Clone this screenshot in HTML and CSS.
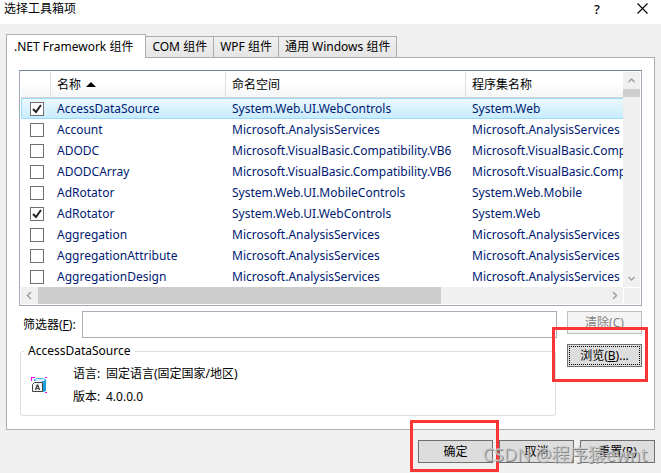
FILE: index.html
```html
<!DOCTYPE html>
<html lang="zh-CN">
<head>
  <meta charset="UTF-8" />
  <meta name="viewport" content="width=device-width, initial-scale=1.0"/>
  <title>选择工具箱项</title>
  <link rel="stylesheet" href="styles.css">
</head>
<body>

  <header class="titlebar">
    <h1>选择工具箱项</h1>
    <button class="title-button help" aria-label="帮助">?</button>
    <button class="title-button" aria-label="关闭">
      <svg width="11" height="11" viewBox="0 0 11 11"><path d="M.5 .5l10 10M10.5 .5l-10 10" stroke="#000" stroke-width="1.1" fill="none"/></svg>
    </button>
  </header>

  <main class="dialog">
    <div class="tabs" role="tablist">
      <button class="tab active" role="tab" aria-selected="true">.NET Framework 组件</button>
      <button class="tab" role="tab">COM 组件</button>
      <button class="tab" role="tab">WPF 组件</button>
      <button class="tab" role="tab">通用 Windows 组件</button>
    </div>

    <div class="panel">
      <div class="list">
        <div class="list-view">
          <table>
            <colgroup>
              <col class="col-check">
              <col class="col-name">
              <col class="col-namespace">
              <col>
            </colgroup>
            <thead>
              <tr>
                <th></th>
                <th>名称 <svg class="sort" width="10" height="5" viewBox="0 0 10 5"><path d="M0 5L5 0l5 5z"/></svg></th>
                <th>命名空间</th>
                <th>程序集名称</th>
              </tr>
            </thead>
            <tbody>
              <tr class="selected">
                <td><input type="checkbox" aria-label="AccessDataSource" checked></td>
                <td>AccessDataSource</td>
                <td>System.Web.UI.WebControls</td>
                <td>System.Web</td>
              </tr>
              <tr>
                <td><input type="checkbox" aria-label="Account"></td>
                <td>Account</td>
                <td>Microsoft.AnalysisServices</td>
                <td>Microsoft.AnalysisServices</td>
              </tr>
              <tr>
                <td><input type="checkbox" aria-label="ADODC"></td>
                <td>ADODC</td>
                <td>Microsoft.VisualBasic.Compatibility.VB6</td>
                <td>Microsoft.VisualBasic.Compatibility</td>
              </tr>
              <tr>
                <td><input type="checkbox" aria-label="ADODCArray"></td>
                <td>ADODCArray</td>
                <td>Microsoft.VisualBasic.Compatibility.VB6</td>
                <td>Microsoft.VisualBasic.Compatibility</td>
              </tr>
              <tr>
                <td><input type="checkbox" aria-label="AdRotator"></td>
                <td>AdRotator</td>
                <td>System.Web.UI.MobileControls</td>
                <td>System.Web.Mobile</td>
              </tr>
              <tr>
                <td><input type="checkbox" aria-label="AdRotator" checked></td>
                <td>AdRotator</td>
                <td>System.Web.UI.WebControls</td>
                <td>System.Web</td>
              </tr>
              <tr>
                <td><input type="checkbox" aria-label="Aggregation"></td>
                <td>Aggregation</td>
                <td>Microsoft.AnalysisServices</td>
                <td>Microsoft.AnalysisServices</td>
              </tr>
              <tr>
                <td><input type="checkbox" aria-label="AggregationAttribute"></td>
                <td>AggregationAttribute</td>
                <td>Microsoft.AnalysisServices</td>
                <td>Microsoft.AnalysisServices</td>
              </tr>
              <tr>
                <td><input type="checkbox" aria-label="AggregationDesign"></td>
                <td>AggregationDesign</td>
                <td>Microsoft.AnalysisServices</td>
                <td>Microsoft.AnalysisServices</td>
              </tr>
            </tbody>
          </table>
        </div>
        <div class="scroll vertical">
          <svg width="17" height="17" viewBox="0 0 17 17"><path d="M5.5 10l3-3 3 3"/></svg>
          <div class="thumb"></div>
          <svg width="17" height="17" viewBox="0 0 17 17"><path d="M5.5 7l3 3 3-3"/></svg>
        </div>
        <div class="scroll horizontal">
          <svg width="17" height="17" viewBox="0 0 17 17"><path d="M10 5l-3.500 3.500 3.500 3.500"/></svg>
          <div class="thumb"></div>
          <svg width="17" height="17" viewBox="0 0 17 17"><path d="M7 5l3.500 3.500-3.500 3.500"/></svg>
        </div>
        <div class="corner"></div>
      </div>

      <div class="lower">
        <div class="details">
          <div class="filter">
            <label for="filter">筛选器(<u>F</u>):</label>
            <input type="text" id="filter">
          </div>
          <fieldset>
            <legend>AccessDataSource</legend>
            <svg class="component-icon" width="16" height="16" viewBox="0 0 16 16">
              <path d="M0 0h4v1H1v3H0zM14 0h2v1h-2zM14 15h2v1h-2z" fill="#f0f"/>
              <path d="M3 4V3c0-1 2-2 6-2s6 1 6 2v10c0 1-1 2-3 2V6l-2-2z" fill="#1ba1e2"/>
              <ellipse cx="9" cy="3" rx="5" ry="1.300" fill="#d5effb"/>
              <path d="M3.500 5.500h8v9h-10v-7z" fill="#f4f4f4" stroke="#424242"/>
              <path d="M4.500 13l1.700-5h.6l1.700 5M5 11.500h3" fill="none" stroke="#424242" stroke-width="1.200"/>
            </svg>
            <dl>
              <dt>语言:</dt><dd>固定语言(固定国家/地区)</dd>
              <dt>版本:</dt><dd>4.0.0.0</dd>
            </dl>
          </fieldset>
        </div>
        <div class="side">
          <button class="btn" disabled>清除(<u>C</u>)</button>
          <div class="marked">
            <button class="btn focused">浏览(<u>B</u>)...</button>
          </div>
        </div>
      </div>
    </div>

    <footer class="actions">
      <div class="marked">
        <button class="btn">确定</button>
      </div>
      <button class="btn">取消</button>
      <button class="btn">重置(<u>R</u>)</button>
      <span class="watermark">CSDN @程序猿ewnt</span>
    </footer>
  </main>

</body>
</html>
```

FILE: styles.css
```css
* {
  box-sizing: border-box;
}
body {
  margin: 0;
  min-height: 100vh;
  background: #f0f0f0;
  color: #000;
  font: 12px/16px "Noto Sans", "Noto Sans CJK SC", sans-serif;
  overflow: hidden;
}
button, input {
  font: inherit;
  color: inherit;
}
.titlebar {
  display: flex;
  align-items: center;
  height: 24px;
  padding: 0 4px 7px;
  background: #fff;
}
h1 {
  flex: 1;
  margin: 0;
  font-size: 12px;
  font-weight: normal;
}
.title-button {
  display: flex;
  align-items: center;
  justify-content: center;
  width: 30px;
  height: 16px;
  margin-left: 15px;
  padding: 0;
  border: none;
  background: none;
}
.help {
  font-size: 13px;
  font-weight: 500;
}
.dialog {
  padding: 10px 6px;
}
.tabs {
  display: flex;
  align-items: flex-end;
  height: 23px;
}
.tab {
  height: 21px;
  margin-left: -1px;
  padding: 0 6px;
  border: 1px solid #acacac;
  border-bottom: none;
  background: linear-gradient(#f0f0f0, #e5e5e5);
  line-height: 20px;
  white-space: nowrap;
}
.tab.active {
  z-index: 1;
  height: 24px;
  margin: 0 0 -1px;
  padding: 0 12px 0 7px;
  background: #fff;
}
.panel {
  padding: 12px 12px 13px;
  border: 1px solid #acacac;
  background: #fff;
}
.list {
  display: grid;
  grid-template-columns: minmax(0, 1fr) 17px;
  grid-template-rows: 215px 17px;
  padding: 1px;
  border: 1px solid #828790;
  border-color: #71849b #a0a9b6 #a0a9b6;
}
.list-view {
  overflow: hidden;
}
table {
  width: 100%;
  table-layout: fixed;
  border-collapse: separate;
  border-spacing: 0;
}
.col-check {
  width: 30px;
}
.col-name {
  width: 175px;
}
.col-namespace {
  width: 240px;
}
th, td {
  padding: 0 0 0 6px;
  text-align: left;
  white-space: nowrap;
  font-weight: normal;
}
th {
  height: 26px;
  border-right: 1px solid #dedfe1;
  border-bottom: 1px solid #d5d5d5;
  background: linear-gradient(#fff 40%, #f4f5f6);
}
th:last-child {
  border-right: none;
}
.sort {
  margin-left: 2px;
  vertical-align: 2px;
}
td {
  height: 21px;
  color: #001a73;
}
td:first-child {
  padding-left: 9px;
}
.selected td {
  border: 1px solid #99dcf9;
  border-width: 1px 0;
  background: linear-gradient(#ecf8fe, #c8ecfc);
}
.selected td:first-child {
  border-left-width: 1px;
  padding-left: 8px;
  border-radius: 2px 0 0 2px;
}
input[type="checkbox"] {
  appearance: none;
  display: block;
  width: 14px;
  height: 14px;
  margin: 0;
  border: 1px solid #707070;
  background: #fff;
}
input[type="checkbox"]:checked {
  background: #fff url("data:image/svg+xml,%3Csvg xmlns='http://www.w3.org/2000/svg' viewBox='0 0 12 12'%3E%3Cpath d='M2 6l3 3 5-7' fill='none' stroke='%23212121' stroke-width='2'/%3E%3C/svg%3E");
}
.scroll {
  display: flex;
  background: #f0f0f0;
}
.scroll path {
  fill: none;
  stroke: #a0a0a0;
  stroke-width: 1.5;
}
.scroll svg:last-child {
  margin: auto 0 0 auto;
}
.vertical {
  flex-direction: column;
}
.vertical .thumb {
  height: 8px;
  background: #cdcdcd;
}
.horizontal .thumb {
  width: 67%;
  background: #cdcdcd;
}
.corner {
  margin: 1px 0 0 1px;
  background: #f0f0f0;
}
.lower {
  display: flex;
  gap: 10px;
  margin-top: 5px;
}
.details {
  flex: 1;
}
.filter {
  display: flex;
  align-items: center;
  padding-left: 4px;
}
.filter label {
  width: 59px;
}
.filter input {
  flex: 1;
  min-width: 0;
  height: 27px;
  border: 1px solid #abadb3;
  background: #fff;
}
fieldset {
  display: flex;
  align-items: center;
  gap: 26px;
  min-width: 0;
  height: 73px;
  margin: 5px 1px 0;
  padding: 0 10px 4px;
  border: 1px solid #d5dfe5;
  border-radius: 3px;
}
legend {
  margin-left: -7px;
  padding: 0 4px;
}
dl {
  display: grid;
  grid-template-columns: 33px 1fr;
  row-gap: 7px;
  margin: 0;
}
dd {
  margin: 0;
}
.side {
  display: flex;
  flex-direction: column;
  gap: 10px;
}
.btn {
  display: block;
  width: 75px;
  height: 23px;
  padding: 0;
  border: 1px solid #707070;
  background: #ddd;
  line-height: 20px;
}
.btn:disabled {
  border-color: #bfbfbf;
  background: #f4f4f4;
  color: #838383;
}
.focused {
  outline: 1px dotted #000;
  outline-offset: -3px;
}
.marked {
  position: relative;
}
.marked::after {
  content: "";
  position: absolute;
  inset: -17px -6px -15px -15px;
  border: 3px solid #fc3535;
  pointer-events: none;
}
.actions {
  position: relative;
  display: flex;
  justify-content: flex-end;
  gap: 6px;
  padding-top: 10px;
}
.actions .marked::after {
  inset: -20px -6px -9px -8px;
}
.watermark {
  position: absolute;
  top: 14px;
  right: 8px;
  color: rgba(205, 205, 205, 0.8);
  font-size: 18px;
  line-height: 20px;
  text-shadow: 1px 1px 0 #888;
  white-space: nowrap;
  pointer-events: none;
}
```
